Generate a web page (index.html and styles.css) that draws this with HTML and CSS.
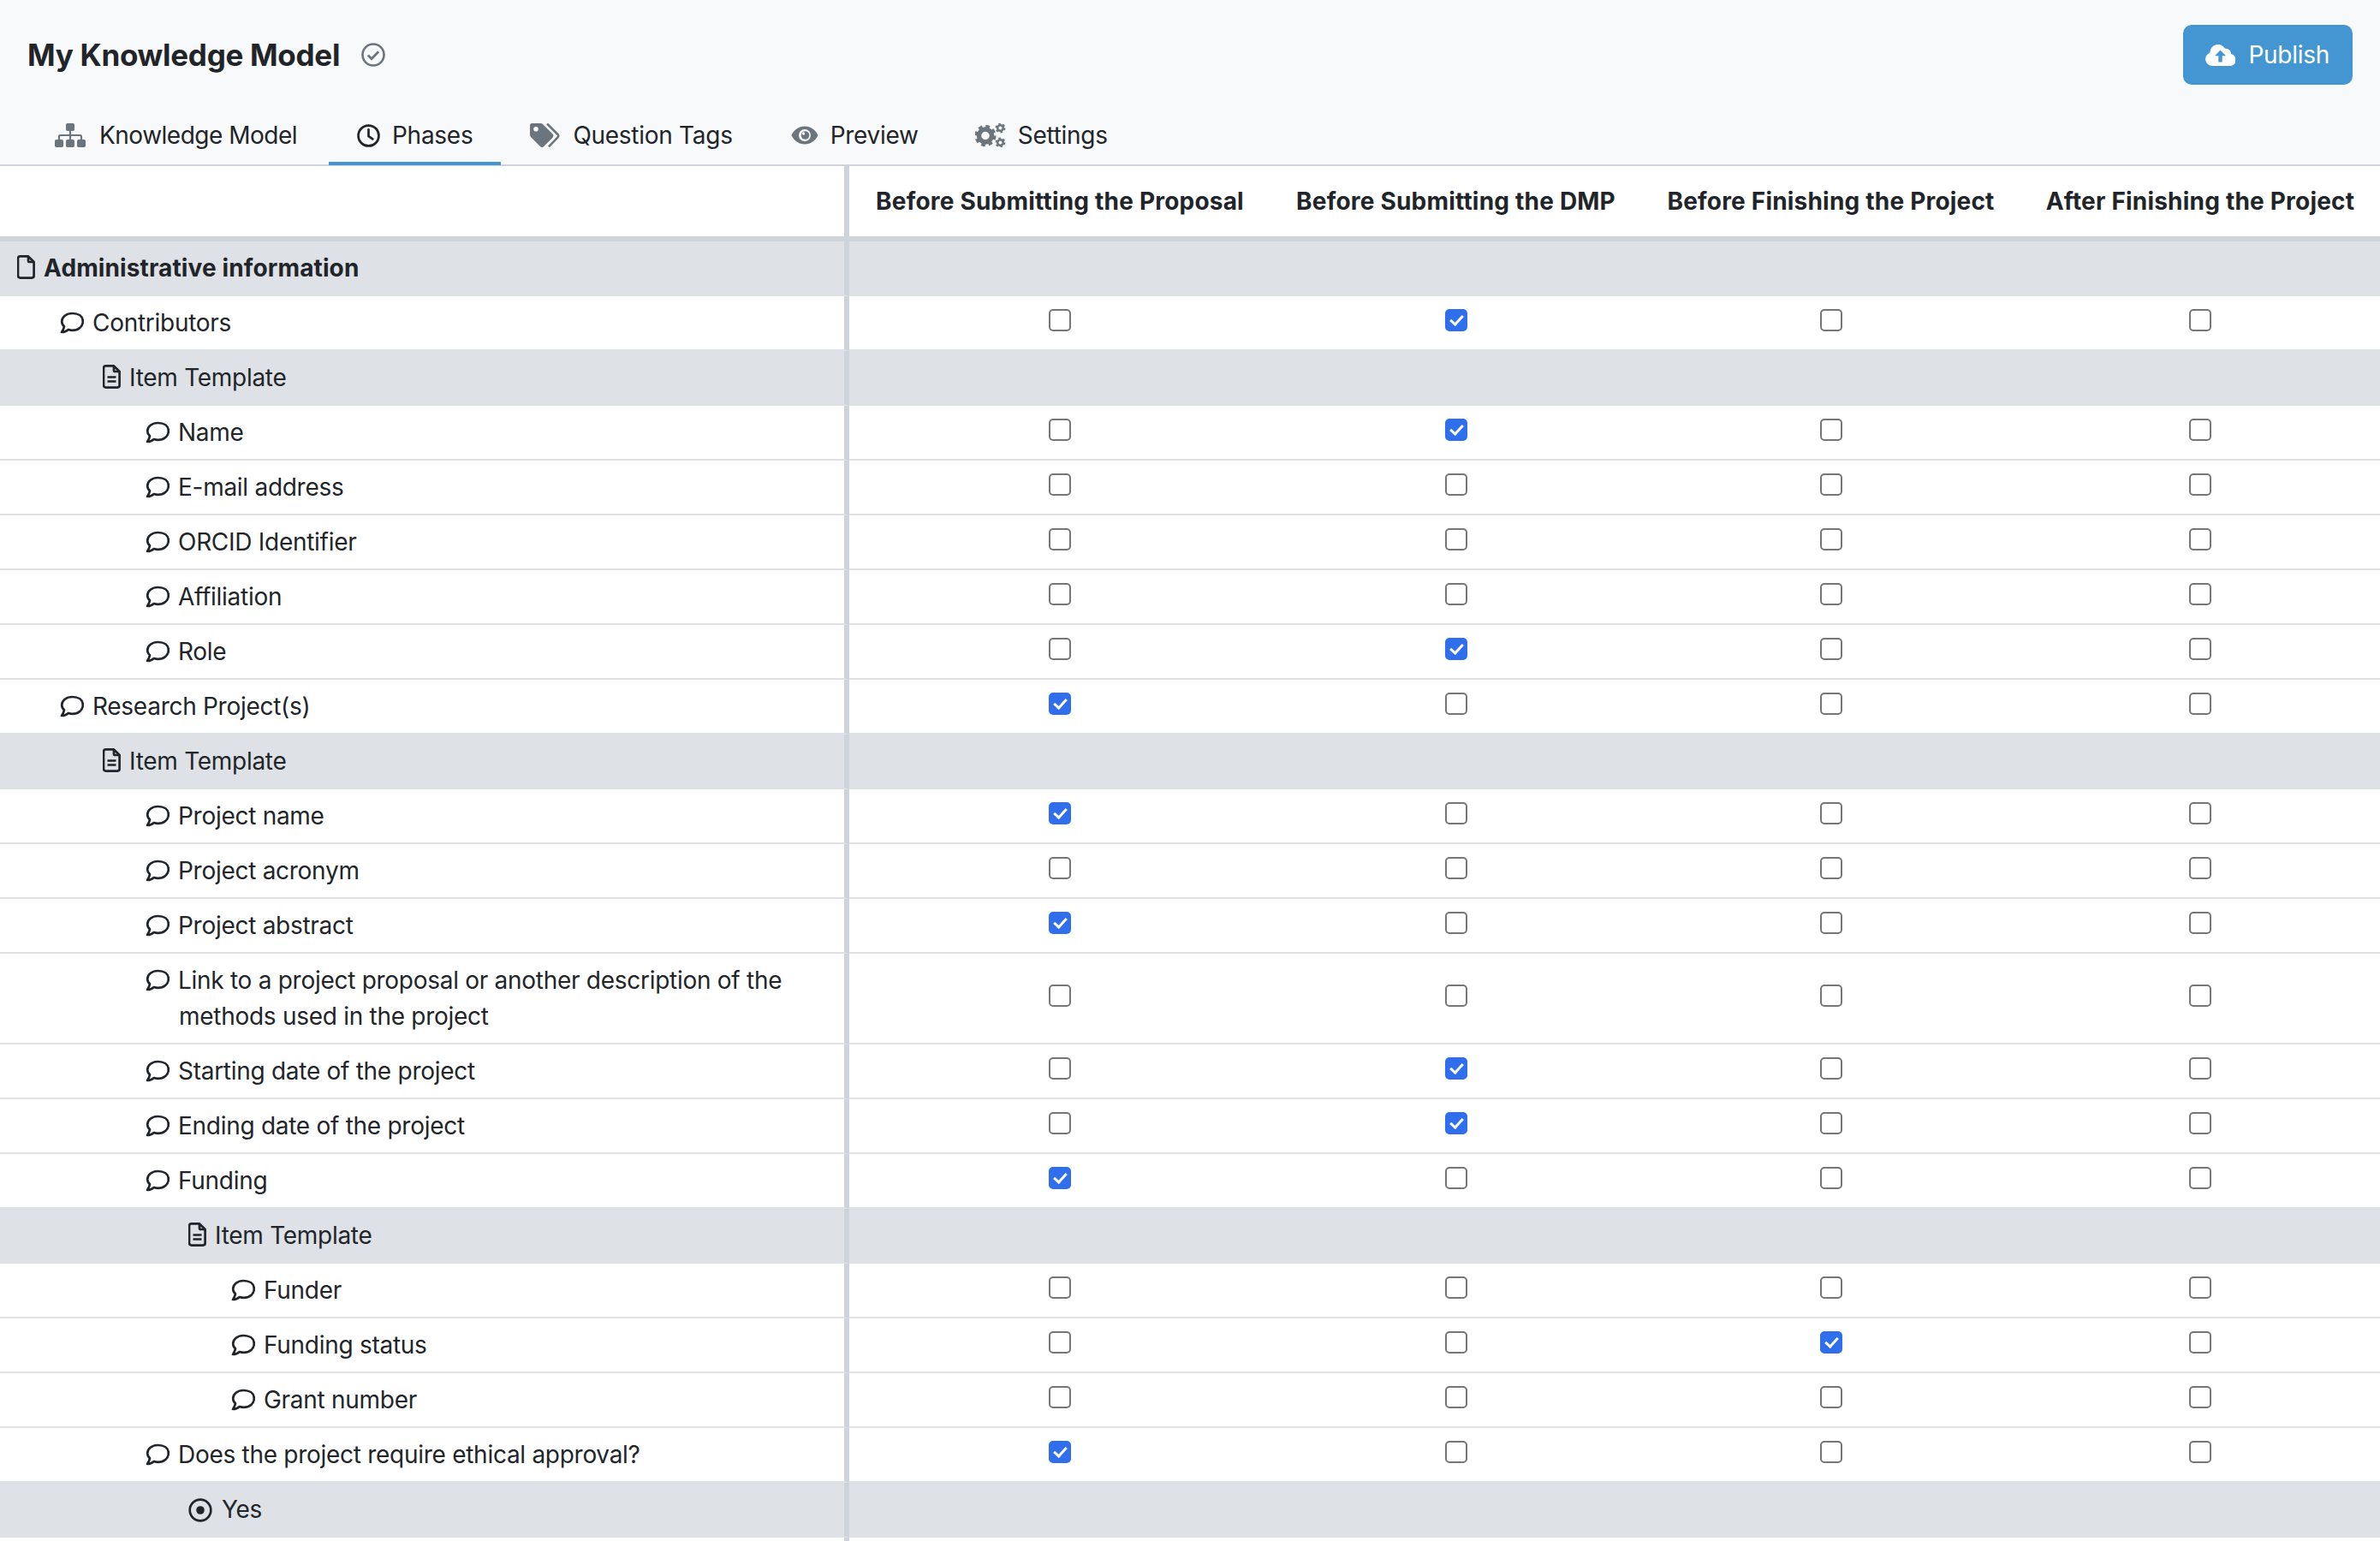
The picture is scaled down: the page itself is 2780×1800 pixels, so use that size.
FILE: index.html
```html
<!DOCTYPE html>
<html lang="en">
<head>
    <meta charset="UTF-8">
    <title>My Knowledge Model</title>
    <link rel="stylesheet" href="styles.css">
</head>
<body>
    <svg class="icon-defs" aria-hidden="true">
        <symbol id="i-comment" viewBox="0 0 28 26"><path d="M14.5 2C7.6 2 2.2 6.2 2.2 11.4c0 2.3 1 4.3 2.8 5.9-.4 2.6-1.7 5-3 6.7 3 0 5.9-1.300 7.800-3 1.600.5 3.100.8 4.700.8 6.900 0 12.300-4.200 12.300-10.400S21.400 2 14.500 2z" fill="none" stroke="currentColor" stroke-width="2.700" stroke-linejoin="round"/></symbol>
        <symbol id="i-file" viewBox="0 0 21 28"><path d="M3.500 1.400h9.500l6.600 6.600v16.100a2.500 2.500 0 0 1-2.500 2.500h-13.600a2.500 2.500 0 0 1-2.500-2.500v-20.200a2.500 2.500 0 0 1 2.500-2.500zM13 1.400v5.100a1.500 1.500 0 0 0 1.500 1.500h5.100" fill="none" stroke="currentColor" stroke-width="2.700" stroke-linejoin="round"/></symbol>
        <symbol id="i-file-lines" viewBox="0 0 21 28"><path d="M3.500 1.400h9.500l6.600 6.600v16.100a2.500 2.500 0 0 1-2.500 2.500h-13.600a2.500 2.500 0 0 1-2.500-2.500v-20.200a2.500 2.500 0 0 1 2.500-2.500zM13 1.400v5.100a1.500 1.500 0 0 0 1.500 1.500h5.100M5.500 14.500h10M5.500 19.500h10" fill="none" stroke="currentColor" stroke-width="2.700" stroke-linejoin="round"/></symbol>
        <symbol id="i-dot-circle" viewBox="0 0 28 28"><circle cx="14" cy="14" r="12.300" fill="none" stroke="currentColor" stroke-width="2.700"/><circle cx="14" cy="14" r="4.800" fill="currentColor"/></symbol>
        <symbol id="i-check-circle" viewBox="0 0 28 28"><circle cx="14" cy="14" r="12.500" fill="none" stroke="currentColor" stroke-width="2.600"/><path d="M7.800 14.500l4.200 4.200 8.200-8.400" fill="none" stroke="currentColor" stroke-width="2.800"/></symbol>
        <symbol id="i-sitemap" viewBox="0 0 36 28"><rect x="13" y="0" width="10" height="9" rx="1.800" fill="currentColor"/><rect x="0" y="19" width="10" height="9" rx="1.800" fill="currentColor"/><rect x="13" y="19" width="10" height="9" rx="1.800" fill="currentColor"/><rect x="26" y="19" width="10" height="9" rx="1.800" fill="currentColor"/><path d="M18 9v10M5 19v-3.500a1.500 1.500 0 0 1 1.500-1.500h23a1.500 1.500 0 0 1 1.500 1.500v3.500" fill="none" stroke="currentColor" stroke-width="2.200"/></symbol>
        <symbol id="i-clock" viewBox="0 0 28 28"><circle cx="14" cy="14" r="12.400" fill="none" stroke="currentColor" stroke-width="2.800"/><path d="M14 6.500v8l5 3.500" fill="none" stroke="currentColor" stroke-width="2.800" stroke-linecap="round"/></symbol>
        <symbol id="i-tags" viewBox="0 0 35 28"><path fill-rule="evenodd" d="M2.500 0h10c1 0 1.800.4 2.500 1l11.500 11.500c1.200 1.200 1.200 3 0 4.200l-10.300 10.300c-1.200 1.200-3 1.200-4.200 0l-11-11c-.7-.7-1-1.500-1-2.500v-11c0-1.400 1.100-2.500 2.500-2.500zm4.500 4a2.800 2.800 0 1 0 0 5.600 2.800 2.800 0 0 0 0-5.600z" fill="currentColor"/><path d="M20 .5l12.500 12.500c1 1 1 2.300 0 3.300l-10.500 11" fill="none" stroke="currentColor" stroke-width="2.600"/></symbol>
        <symbol id="i-eye" viewBox="0 0 32 24"><path fill-rule="evenodd" d="M16 1.500c7 0 12.800 4.500 15.500 10.500-2.700 6-8.500 10.500-15.500 10.500s-12.800-4.500-15.500-10.500c2.700-6 8.500-10.500 15.500-10.500zm0 3.500a7 7 0 1 0 0 14 7 7 0 0 0 0-14z" fill="currentColor"/><circle cx="16.500" cy="12" r="4.800" fill="currentColor"/><circle cx="14.500" cy="10" r="1.700" fill="#f8f9fa"/></symbol>
        <symbol id="i-cogs" viewBox="0 0 36 28"><circle cx="12" cy="14.500" r="7.500" fill="none" stroke="currentColor" stroke-width="5.500"/><circle cx="12" cy="14.500" r="10.700" fill="none" stroke="currentColor" stroke-width="3.800" stroke-dasharray="4.600 3.800"/><circle cx="29.500" cy="5.500" r="3.300" fill="none" stroke="currentColor" stroke-width="2.500"/><circle cx="29.500" cy="5.500" r="5" fill="none" stroke="currentColor" stroke-width="2" stroke-dasharray="2.600 2.600"/><circle cx="29.500" cy="22.500" r="3.300" fill="none" stroke="currentColor" stroke-width="2.500"/><circle cx="29.500" cy="22.500" r="5" fill="none" stroke="currentColor" stroke-width="2" stroke-dasharray="2.600 2.600"/></symbol>
        <symbol id="i-cloud" viewBox="0 0 35 25"><path fill-rule="evenodd" d="M8 25a8 8 0 0 1-2.700-15.500 9.500 9.500 0 0 1 17.800-4.700 6 6 0 0 1 7 6.200 7 7 0 0 1-3.100 14zM17.500 6.500l-6.500 6.700h4.300v7.300h4.400v-7.300h4.300z" fill="currentColor"/></symbol>
    </svg>

    <header class="page-header">
        <div class="title-row">
            <h1 class="title">My Knowledge Model</h1>
            <svg class="icon title-check"><use href="#i-check-circle"/></svg>
            <button class="btn-publish">
                <svg class="icon publish-icon"><use href="#i-cloud"/></svg>
                Publish
            </button>
        </div>
        <nav class="tabs">
            <a class="tab tab-first"><svg class="icon tab-sitemap"><use href="#i-sitemap"/></svg>Knowledge Model</a>
            <a class="tab active"><svg class="icon tab-clock"><use href="#i-clock"/></svg>Phases</a>
            <a class="tab"><svg class="icon tab-tags"><use href="#i-tags"/></svg>Question Tags</a>
            <a class="tab tab-preview"><svg class="icon tab-eye"><use href="#i-eye"/></svg>Preview</a>
            <a class="tab"><svg class="icon tab-cogs"><use href="#i-cogs"/></svg>Settings</a>
        </nav>
    </header>

    <div class="table-wrap">
        <table class="phases">
            <colgroup>
                <col class="col-name">
                <col class="col-a">
                <col class="col-b">
                <col class="col-c">
                <col class="col-d">
            </colgroup>
            <thead>
                <tr>
                    <th class="name"></th>
                    <th>Before Submitting the Proposal</th>
                    <th>Before Submitting the DMP</th>
                    <th>Before Finishing the Project</th>
                    <th>After Finishing the Project</th>
                </tr>
            </thead>
            <tbody>
                <tr class="group chapter">
                    <td class="name level-0"><span class="label label-file"><svg class="icon i-file"><use href="#i-file"/></svg>Administrative information</span></td>
                    <td></td><td></td><td></td><td></td>
                </tr>
                <tr>
                    <td class="name level-1"><span class="label"><svg class="icon i-comment"><use href="#i-comment"/></svg>Contributors</span></td>
                    <td><input type="checkbox"></td><td><input type="checkbox" checked></td><td><input type="checkbox"></td><td><input type="checkbox"></td>
                </tr>
                <tr class="group">
                    <td class="name level-2"><span class="label label-file"><svg class="icon i-file"><use href="#i-file-lines"/></svg>Item Template</span></td>
                    <td></td><td></td><td></td><td></td>
                </tr>
                <tr>
                    <td class="name level-3"><span class="label"><svg class="icon i-comment"><use href="#i-comment"/></svg>Name</span></td>
                    <td><input type="checkbox"></td><td><input type="checkbox" checked></td><td><input type="checkbox"></td><td><input type="checkbox"></td>
                </tr>
                <tr>
                    <td class="name level-3"><span class="label"><svg class="icon i-comment"><use href="#i-comment"/></svg>E-mail address</span></td>
                    <td><input type="checkbox"></td><td><input type="checkbox"></td><td><input type="checkbox"></td><td><input type="checkbox"></td>
                </tr>
                <tr>
                    <td class="name level-3"><span class="label"><svg class="icon i-comment"><use href="#i-comment"/></svg>ORCID Identifier</span></td>
                    <td><input type="checkbox"></td><td><input type="checkbox"></td><td><input type="checkbox"></td><td><input type="checkbox"></td>
                </tr>
                <tr>
                    <td class="name level-3"><span class="label"><svg class="icon i-comment"><use href="#i-comment"/></svg>Affiliation</span></td>
                    <td><input type="checkbox"></td><td><input type="checkbox"></td><td><input type="checkbox"></td><td><input type="checkbox"></td>
                </tr>
                <tr>
                    <td class="name level-3"><span class="label"><svg class="icon i-comment"><use href="#i-comment"/></svg>Role</span></td>
                    <td><input type="checkbox"></td><td><input type="checkbox" checked></td><td><input type="checkbox"></td><td><input type="checkbox"></td>
                </tr>
                <tr>
                    <td class="name level-1"><span class="label"><svg class="icon i-comment"><use href="#i-comment"/></svg>Research Project(s)</span></td>
                    <td><input type="checkbox" checked></td><td><input type="checkbox"></td><td><input type="checkbox"></td><td><input type="checkbox"></td>
                </tr>
                <tr class="group">
                    <td class="name level-2"><span class="label label-file"><svg class="icon i-file"><use href="#i-file-lines"/></svg>Item Template</span></td>
                    <td></td><td></td><td></td><td></td>
                </tr>
                <tr>
                    <td class="name level-3"><span class="label"><svg class="icon i-comment"><use href="#i-comment"/></svg>Project name</span></td>
                    <td><input type="checkbox" checked></td><td><input type="checkbox"></td><td><input type="checkbox"></td><td><input type="checkbox"></td>
                </tr>
                <tr>
                    <td class="name level-3"><span class="label"><svg class="icon i-comment"><use href="#i-comment"/></svg>Project acronym</span></td>
                    <td><input type="checkbox"></td><td><input type="checkbox"></td><td><input type="checkbox"></td><td><input type="checkbox"></td>
                </tr>
                <tr>
                    <td class="name level-3"><span class="label"><svg class="icon i-comment"><use href="#i-comment"/></svg>Project abstract</span></td>
                    <td><input type="checkbox" checked></td><td><input type="checkbox"></td><td><input type="checkbox"></td><td><input type="checkbox"></td>
                </tr>
                <tr>
                    <td class="name level-3"><span class="label"><svg class="icon i-comment"><use href="#i-comment"/></svg>Link to a project proposal or another description of the methods used in the project</span></td>
                    <td><input type="checkbox"></td><td><input type="checkbox"></td><td><input type="checkbox"></td><td><input type="checkbox"></td>
                </tr>
                <tr>
                    <td class="name level-3"><span class="label"><svg class="icon i-comment"><use href="#i-comment"/></svg>Starting date of the project</span></td>
                    <td><input type="checkbox"></td><td><input type="checkbox" checked></td><td><input type="checkbox"></td><td><input type="checkbox"></td>
                </tr>
                <tr>
                    <td class="name level-3"><span class="label"><svg class="icon i-comment"><use href="#i-comment"/></svg>Ending date of the project</span></td>
                    <td><input type="checkbox"></td><td><input type="checkbox" checked></td><td><input type="checkbox"></td><td><input type="checkbox"></td>
                </tr>
                <tr>
                    <td class="name level-3"><span class="label"><svg class="icon i-comment"><use href="#i-comment"/></svg>Funding</span></td>
                    <td><input type="checkbox" checked></td><td><input type="checkbox"></td><td><input type="checkbox"></td><td><input type="checkbox"></td>
                </tr>
                <tr class="group">
                    <td class="name level-4"><span class="label label-file"><svg class="icon i-file"><use href="#i-file-lines"/></svg>Item Template</span></td>
                    <td></td><td></td><td></td><td></td>
                </tr>
                <tr>
                    <td class="name level-5"><span class="label"><svg class="icon i-comment"><use href="#i-comment"/></svg>Funder</span></td>
                    <td><input type="checkbox"></td><td><input type="checkbox"></td><td><input type="checkbox"></td><td><input type="checkbox"></td>
                </tr>
                <tr>
                    <td class="name level-5"><span class="label"><svg class="icon i-comment"><use href="#i-comment"/></svg>Funding status</span></td>
                    <td><input type="checkbox"></td><td><input type="checkbox"></td><td><input type="checkbox" checked></td><td><input type="checkbox"></td>
                </tr>
                <tr>
                    <td class="name level-5"><span class="label"><svg class="icon i-comment"><use href="#i-comment"/></svg>Grant number</span></td>
                    <td><input type="checkbox"></td><td><input type="checkbox"></td><td><input type="checkbox"></td><td><input type="checkbox"></td>
                </tr>
                <tr>
                    <td class="name level-3"><span class="label"><svg class="icon i-comment"><use href="#i-comment"/></svg>Does the project require ethical approval?</span></td>
                    <td><input type="checkbox" checked></td><td><input type="checkbox"></td><td><input type="checkbox"></td><td><input type="checkbox"></td>
                </tr>
                <tr class="group">
                    <td class="name level-4"><span class="label label-radio"><svg class="icon i-radio"><use href="#i-dot-circle"/></svg>Yes</span></td>
                    <td></td><td></td><td></td><td></td>
                </tr>
                <tr>
                    <td class="name level-5"></td>
                    <td></td><td></td><td></td><td></td>
                </tr>
            </tbody>
        </table>
    </div>
</body>
</html>
```

FILE: styles.css
```css
html, body {
    height: 100%;
    overflow: hidden;
}
body {
    margin: 0;
    font-family: Inter, "Liberation Sans", sans-serif;
    font-size: 28px;
    line-height: 42px;
    letter-spacing: -0.28px;
    color: #212529;
    background: white;
}
.icon-defs {
    display: none;
}
.icon {
    display: inline-block;
    flex: none;
}

/* header */
.page-header {
    height: 192px;
    background: #f8f9fa;
    border-bottom: 2px solid #ced4da;
}
.title-row {
    display: flex;
    align-items: center;
    height: 70px;
    padding: 29px 32px 0 32px;
}
.title {
    margin: 0;
    font-size: 35px;
    line-height: 70px;
    font-weight: 700;
}
.title-check {
    width: 28px;
    height: 28px;
    margin-left: 25px;
    color: #6c757d;
}
.btn-publish {
    display: flex;
    align-items: center;
    height: 70px;
    margin-left: auto;
    padding: 0 27px 0 26px;
    border: 0;
    border-radius: 10px;
    background: #4496d3;
    color: white;
    font: inherit;
    letter-spacing: inherit;
}
.publish-icon {
    width: 35px;
    height: 25px;
    margin-right: 15px;
}

/* tabs */
.tabs {
    display: flex;
    margin-top: 30px;
    padding-left: 30px;
}
.tab {
    display: flex;
    align-items: center;
    padding: 8px 34px 10px 34px;
    border-bottom: 4px solid transparent;
    margin-bottom: -1px;
}
.tab-first {
    padding-right: 37px;
    letter-spacing: -0.5px;
}
.tab-preview {
    padding-right: 32px;
}
.tab .icon {
    color: #6c757d;
}
.tab.active {
    padding-left: 33px;
    padding-right: 33px;
    border-bottom-color: #4496d3;
}
.tab.active .icon {
    color: #212529;
}
.tab-sitemap {
    width: 36px;
    height: 28px;
    margin-right: 16px;
}
.tab-clock {
    width: 27px;
    height: 27px;
    margin-right: 14px;
}
.tab-tags {
    width: 35px;
    height: 28px;
    margin-right: 15px;
}
.tab-eye {
    width: 32px;
    height: 24px;
    margin-right: 14px;
}
.tab-cogs {
    width: 36px;
    height: 28px;
    margin-right: 14px;
}

/* table */
.table-wrap {
    overflow: hidden;
}
.phases {
    width: 2780px;
    table-layout: fixed;
    border-collapse: separate;
    border-spacing: 0;
}
.col-name { width: 992px; }
.col-a { width: 492px; }
.col-b { width: 433px; }
.col-c { width: 443px; }
.col-d { width: 420px; }

.phases th {
    padding: 20px 0;
    font-weight: 700;
    letter-spacing: 0.2px;
    white-space: nowrap;
    border-bottom: 6px solid #ced4da;
}
.phases td {
    padding: 10px 30px;
    text-align: center;
    vertical-align: middle;
    border-bottom: 2px solid #dee2e6;
}
.phases .name {
    text-align: left;
    border-right: 6px solid #ced4da;
}
.group td {
    background: #dee2e6;
}
.chapter .label {
    font-weight: 700;
    letter-spacing: 0.12px;
}

.level-0 { padding-left: 20px !important; }
.level-1 { padding-left: 70px !important; }
.level-2 { padding-left: 120px !important; }
.level-3 { padding-left: 170px !important; }
.level-4 { padding-left: 220px !important; }
.level-5 { padding-left: 270px !important; }

.label {
    display: block;
    padding-left: 39px;
}
.label-file {
    padding-left: 31px;
}
.label-radio {
    padding-left: 39px;
}
.i-comment {
    width: 28px;
    height: 26px;
    margin-left: -39px;
    margin-right: 10px;
    vertical-align: -3px;
}
.i-file {
    width: 21px;
    height: 28px;
    margin-left: -31px;
    margin-right: 10px;
    vertical-align: -3px;
}
.i-radio {
    width: 28px;
    height: 28px;
    margin-left: -39px;
    margin-right: 11px;
    vertical-align: -5px;
}

/* checkboxes */
.phases input[type="checkbox"] {
    appearance: none;
    display: block;
    position: relative;
    box-sizing: border-box;
    width: 26px;
    height: 26px;
    margin: 0 auto 6px auto;
    border: 2px solid #767676;
    border-radius: 5px;
    background: white;
}
.phases input[type="checkbox"]:checked {
    border-color: #2f6fed;
    background: #2f6fed;
}
.phases input[type="checkbox"]:checked::after {
    content: "";
    position: absolute;
    left: 7px;
    top: 2px;
    width: 6px;
    height: 12px;
    border: solid white;
    border-width: 0 3px 3px 0;
    transform: rotate(42deg);
}
```
